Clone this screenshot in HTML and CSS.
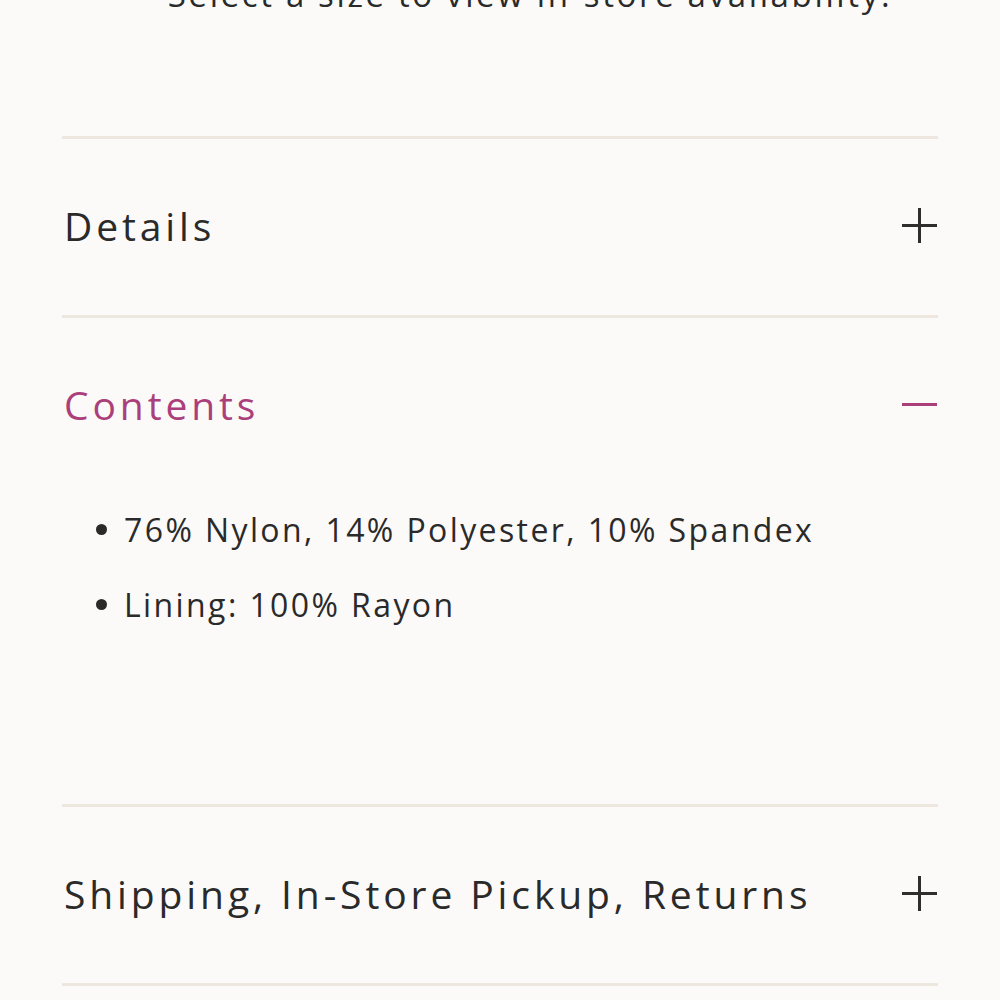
FILE: index.html
```html
<!DOCTYPE html>
<html lang="en">

<head>
    <meta charset="UTF-8">
    <meta name="viewport" content="width=device-width, initial-scale=1.0">
    <title>Product info</title>
    <link rel="stylesheet" href="styles.css">
</head>

<body>
    <div class="product-info">
        <!-- store availability -->
        <p class="availability">Select a size to view in-store availability.</p>

        <!-- accordion -->
        <div class="accordion">
            <div class="accordion-item">
                <button class="accordion-head">
                    <span class="accordion-title">Details</span>
                    <span class="icon icon-plus"></span>
                </button>
            </div>

            <div class="accordion-item open">
                <button class="accordion-head">
                    <span class="accordion-title">Contents</span>
                    <span class="icon icon-minus"></span>
                </button>
                <div class="accordion-body">
                    <ul class="contents-list">
                        <li>76% Nylon, 14% Polyester, 10% Spandex</li>
                        <li>Lining: 100% Rayon</li>
                    </ul>
                </div>
            </div>

            <div class="accordion-item">
                <button class="accordion-head">
                    <span class="accordion-title">Shipping, In-Store Pickup, Returns</span>
                    <span class="icon icon-plus"></span>
                </button>
            </div>
        </div>
    </div>
</body>

</html>
```

FILE: styles.css
```css
/* reset */
* {
    margin: 0;
    padding: 0;
    box-sizing: border-box;
}

body {
    font-family: 'Open Sans', 'Liberation Sans', sans-serif;
    background-color: #fbfaf8;
    color: #2a2a2a;
    overflow: hidden;
}

.product-info {
    padding: 0 62px;
}

/* top line, cut off by the screen */
.availability {
    margin-top: -29px;
    padding-left: 60px;
    font-size: 33px;
    line-height: 48px;
    letter-spacing: 0.08em;
    text-align: center;
    white-space: nowrap;
}

.accordion {
    margin-top: 117px;
    border-bottom: 3px solid #eee7e0;
}

.accordion-item {
    border-top: 3px solid #eee7e0;
}

.accordion-head {
    width: 100%;
    height: 176px;
    padding-bottom: 4px;
    display: flex;
    align-items: center;
    justify-content: space-between;
    background: none;
    border: none;
    font-family: inherit;
    color: inherit;
    text-align: left;
    cursor: pointer;
}

.accordion-title {
    font-size: 39px;
    letter-spacing: 0.1em;
    padding-left: 2px;
}

.open .accordion-title {
    color: #ab3f7b;
}

/* plus / minus */
.icon {
    position: relative;
    width: 35px;
    height: 35px;
    margin-right: 1px;
}

.icon::before,
.icon::after {
    content: '';
    position: absolute;
    background-color: #2e2e2e;
}

.icon::before {
    left: 0;
    right: 0;
    top: 16px;
    height: 3px;
}

.icon-plus::after {
    top: 0;
    bottom: 0;
    left: 16px;
    width: 3px;
}

.icon-minus::before {
    background-color: #ab3f7b;
}

.accordion-body {
    margin-top: -2px;
    padding: 0 0 162px 34px;
}

.contents-list {
    list-style: none;
}

.contents-list li {
    position: relative;
    padding-left: 28px;
    font-size: 32px;
    line-height: 75px;
    letter-spacing: 0.075em;
}

.contents-list li::before {
    content: '';
    position: absolute;
    left: 0;
    top: 32px;
    width: 11px;
    height: 11px;
    border-radius: 50%;
    background-color: #2a2a2a;
}
```
